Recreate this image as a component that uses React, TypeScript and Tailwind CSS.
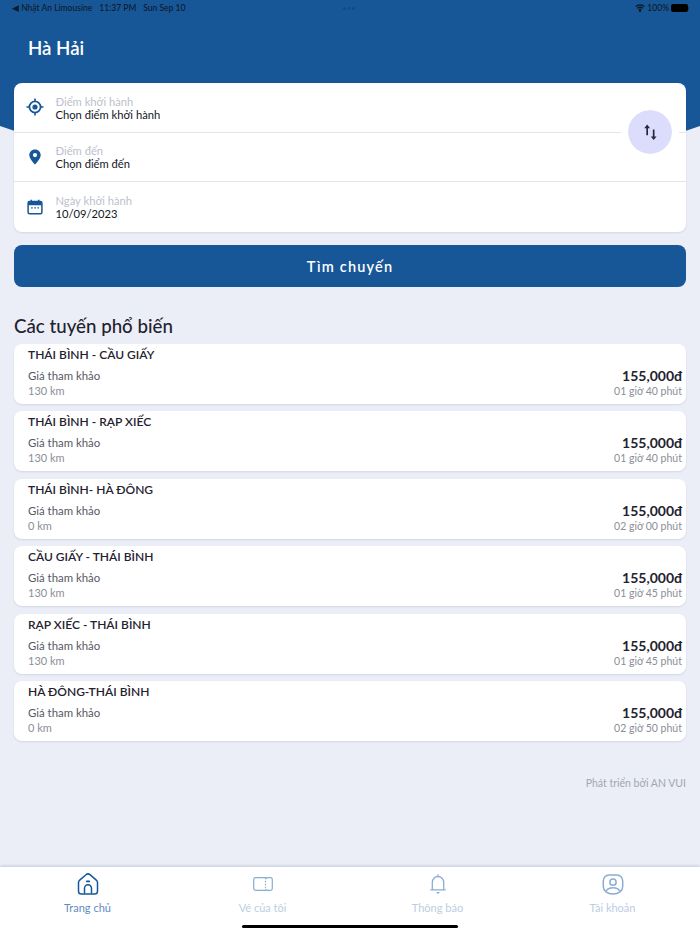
import React from 'react';

const routes = [
  { name: 'THÁI BÌNH - CẦU GIẤY', km: '130 km', time: '01 giờ 40 phút' },
  { name: 'THÁI BÌNH - RẠP XIẾC', km: '130 km', time: '01 giờ 40 phút' },
  { name: 'THÁI BÌNH- HÀ ĐÔNG', km: '0 km', time: '02 giờ 00 phút' },
  { name: 'CẦU GIẤY - THÁI BÌNH', km: '130 km', time: '01 giờ 45 phút' },
  { name: 'RẠP XIẾC - THÁI BÌNH', km: '130 km', time: '01 giờ 45 phút' },
  { name: 'HÀ ĐÔNG-THÁI BÌNH', km: '0 km', time: '02 giờ 50 phút' },
];

const TargetIcon = () => (
  <svg width="18" height="18" viewBox="0 0 18 18" fill="none" stroke="#175797">
    <circle cx="9" cy="9" r="5.6" strokeWidth="1.8" />
    <circle cx="9" cy="9" r="2.6" fill="#175797" stroke="none" />
    <path d="M9 0.5v2.8M9 14.7v2.8M0.5 9h2.8M14.7 9h2.8" strokeWidth="1.6" />
  </svg>
);

const PinIcon = () => (
  <svg width="14" height="16" viewBox="0 0 14 16" fill="#175797">
    <path fillRule="evenodd" d="M7 0.5C3.6 0.5 1.3 3 1.3 6c0 3.6 3.8 7.4 5.7 9.5 1.9-2.1 5.7-5.9 5.7-9.5C12.700 3 10.400 0.500 7 0.500zM7 4a2.100 2.100 0 1 1 0 4.200A2.100 2.100 0 0 1 7 4z" />
  </svg>
);

const CalendarIcon = () => (
  <svg width="16" height="16" viewBox="0 0 16 16" fill="none">
    <rect x="1.100" y="2.400" width="13.800" height="12.400" rx="1.500" stroke="#175797" strokeWidth="1.500" />
    <path d="M1.100 3.900a1.500 1.500 0 0 1 1.500-1.500h10.800a1.500 1.500 0 0 1 1.500 1.500v2.300H1.100z" fill="#175797" />
    <path d="M4.300 0.800v2.500M11.700 0.800v2.500" stroke="#175797" strokeWidth="1.500" />
    <path d="M4.200 8.900h1.500M7.300 8.900h1.500M10.400 8.900h1.500" stroke="#175797" strokeWidth="1.400" />
  </svg>
);

const SwapIcon = () => (
  <svg width="13" height="17" viewBox="0 0 14 18" fill="#24283a">
    <path d="M3.400 0.500 6.500 4.400H4.300V12H2.500V4.400H0.300z" />
    <path d="M10.400 17.200 13.500 13.300H11.300V5.700H9.500V13.300H7.300z" />
  </svg>
);

const HomeIcon = () => (
  <svg width="22" height="22" viewBox="0 0 22 22" fill="none" stroke="#175797" strokeWidth="1.500" strokeLinejoin="round">
    <path d="M1.500 9.500c0-1 .4-1.700 1.200-2.400L9 1.700c1.200-1 2.800-1 4 0l6.300 5.400c.8.700 1.200 1.400 1.200 2.400v8.700c0 1.600-1.200 2.800-2.800 2.800H4.300c-1.600 0-2.800-1.200-2.800-2.800z" />
    <path d="M7.500 20.500v-5.300a3.500 3.500 0 0 1 7 0v5.300" />
    <path d="M9.700 8.300h2.600" strokeWidth="1.800" strokeLinecap="round" />
  </svg>
);

const TicketIcon = () => (
  <svg width="20" height="14" viewBox="0 0 20 14" fill="none" stroke="#8bacd2" strokeWidth="1.200">
    <rect x="0.700" y="0.700" width="18.600" height="12.600" rx="1.800" />
    <path d="M12.500 0.700v12.600" strokeDasharray="1.500 1.500" />
    <path d="M12.500 0.700a1.500 1.500 0 0 0 1.500 0M12.500 13.300a1.500 1.500 0 0 1 1.500 0" />
  </svg>
);

const BellIcon = () => (
  <svg width="16" height="20" viewBox="0 0 16 20" fill="none" stroke="#8bacd2" strokeWidth="1.300" strokeLinecap="round">
    <path d="M0.800 15.800h14.400M2.300 15.800V8.200a5.700 5.700 0 0 1 11.400 0v7.600" />
    <path d="M8 2.500V0.800" />
    <path d="M7.200 18.800h1.600" strokeWidth="1.500" />
  </svg>
);

const AccountIcon = () => (
  <svg width="22" height="21" viewBox="0 0 22 21" fill="none" stroke="#8bacd2" strokeWidth="1.500">
    <path d="M7 0.900h8c3.300 0 5.700 2.700 5.700 6v5.500c0 4.300-4 7.700-9.700 7.700s-9.700-3.400-9.700-7.700V6.900C1.300 3.600 3.700 0.900 7 0.900z" />
    <circle cx="11" cy="8.200" r="3.100" />
    <path d="M4.400 17c.8-2 3.500-3.200 6.600-3.200s5.800 1.200 6.600 3.200" />
  </svg>
);

const Field = ({ icon, label, value, border }: { icon: React.ReactNode; label: string; value: string; border?: boolean }) => (
  <div className={`flex h-[49.500px] items-center ${border ? 'border-b border-[#e4e5ea]' : ''}`}>
    <div className="flex w-[41px] justify-center">{icon}</div>
    <div className="ml-[0.500px] flex flex-col pt-px">
      <span className="text-[11.200px] leading-[13px] text-[#bcbfcc]">{label}</span>
      <span className="text-[11.200px] leading-[13px] text-[#14161f]">{value}</span>
    </div>
  </div>
);

const RouteCard = ({ name, km, time }: { name: string; km: string; time: string }) => (
  <div className="flex h-[60px] flex-col rounded-lg bg-white pl-[14px] pr-1 shadow-[0_1px_2px_rgba(30,50,110,0.12)]">
    <div className="h-6 text-[12px] font-semibold leading-[22px] text-[#1f2230]">{name}</div>
    <div className="flex justify-between">
      <div className="flex flex-col">
        <span className="text-[11.400px] leading-[15px] text-[#555865]">Giá tham khảo</span>
        <span className="text-[11px] leading-[15px] text-[#8b8e98]">{km}</span>
      </div>
      <div className="flex flex-col items-end">
        <span className="mt-[-1px] text-[14px] font-bold leading-[17px] text-[#1f2230]">155,000đ</span>
        <span className="text-[10.500px] leading-[14px] text-[#8b8e98]">{time}</span>
      </div>
    </div>
  </div>
);

const Tab = ({ icon, label, color }: { icon: React.ReactNode; label: string; color: string }) => (
  <div className="flex flex-1 flex-col items-center">
    <div className="flex h-[26px] items-center">{icon}</div>
    <span className={`mt-[4px] text-[11px] leading-[14px] ${color}`}>{label}</span>
  </div>
);

export default function App() {
  return (
    <div className="relative flex h-[934px] w-[700px] flex-col overflow-hidden bg-[#ebeef7] font-['Lato','Noto_Sans',sans-serif]">
      {/* blue curved header behind the form */}
      <svg className="absolute left-0 top-0" width="700" height="190" viewBox="0 0 700 190">
        <path d="M0 0H700V126Q350 250 0 126Z" fill="#175797" />
      </svg>

      <div className="relative flex h-4 items-center justify-between pl-3 pr-[11px] text-[8.500px] font-medium text-[#0e1a2a]">
        <div className="flex gap-[7px]">
          <span>◀ Nhật An Limousine</span>
          <span>11:37 PM</span>
          <span>Sun Sep 10</span>
        </div>
        <div className="absolute left-[343px] top-[7px] flex gap-[2px]">
          <i className="h-[2.500px] w-[2.500px] rounded-full bg-[#0f4a86]" />
          <i className="h-[2.500px] w-[2.500px] rounded-full bg-[#0f4a86]" />
          <i className="h-[2.500px] w-[2.500px] rounded-full bg-[#0f4a86]" />
        </div>
        <div className="flex items-center gap-[2px]">
          <svg width="10" height="8" viewBox="0 0 10 8" fill="none" stroke="#10151f" strokeWidth="1.200">
            <path d="M0.600 2.700a6.200 6.200 0 0 1 8.800 0M2.100 4.300a4 4 0 0 1 5.800 0M3.600 5.800a1.900 1.900 0 0 1 2.800 0" />
            <circle cx="5" cy="7" r="0.500" fill="#10151f" />
          </svg>
          <span>100%</span>
          <div className="flex items-center">
            <div className="h-2 w-[17px] rounded-[2px] bg-black" />
            <div className="h-[3px] w-px bg-[#334]" />
          </div>
        </div>
      </div>

      <div className="relative flex h-[67px] items-start pl-[28px] pt-[20px] text-[18.700px] font-semibold leading-[24px] text-white">
        Hà Hải
      </div>

      <div className="relative px-[14px]">
        <div className="relative rounded-lg bg-white shadow-[0_1px_2px_rgba(30,50,110,0.12)]">
          <Field icon={<TargetIcon />} label="Điểm khởi hành" value="Chọn điểm khởi hành" border />
          <Field icon={<PinIcon />} label="Điểm đến" value="Chọn điểm đến" border />
          <Field icon={<CalendarIcon />} label="Ngày khởi hành" value="10/09/2023" />
          <div className="absolute left-[614px] top-[27px] flex h-11 w-11 items-center justify-center rounded-full bg-[#dcdcfc] outline-[7px] outline-white">
            <SwapIcon />
          </div>
        </div>

        <div className="mt-[13.500px] flex h-[42px] items-center justify-center rounded-lg bg-[#175797] pt-px text-[14.500px] font-semibold tracking-[1.200px] text-white">
          Tìm chuyến
        </div>

        <div className="mt-[26.500px] text-[18.700px] font-medium leading-[24px] text-[#1f2230]">Các tuyến phổ biến</div>

        <div className="mt-[6.500px] flex flex-col gap-[7.400px]">
          {routes.map((r) => (
            <RouteCard key={r.name} {...r} />
          ))}
        </div>

        <div className="mt-[35px] text-right text-[10.500px] leading-[14px] text-[#a3a6b0]">Phát triển bởi AN VUI</div>
      </div>

      <div className="relative mt-auto flex h-[67px] bg-white pt-[4px] shadow-[0_-1px_3px_rgba(30,50,110,0.2)]">
        <Tab icon={<HomeIcon />} label="Trang chủ" color="text-[#5f8cc0]" />
        <Tab icon={<TicketIcon />} label="Vé của tôi" color="text-[#bccde2]" />
        <Tab icon={<BellIcon />} label="Thông báo" color="text-[#bccde2]" />
        <Tab icon={<AccountIcon />} label="Tài khoản" color="text-[#bccde2]" />
        <div className="absolute bottom-[6px] left-[242px] h-[3px] w-[216px] rounded-full bg-black" />
      </div>
    </div>
  );
}
